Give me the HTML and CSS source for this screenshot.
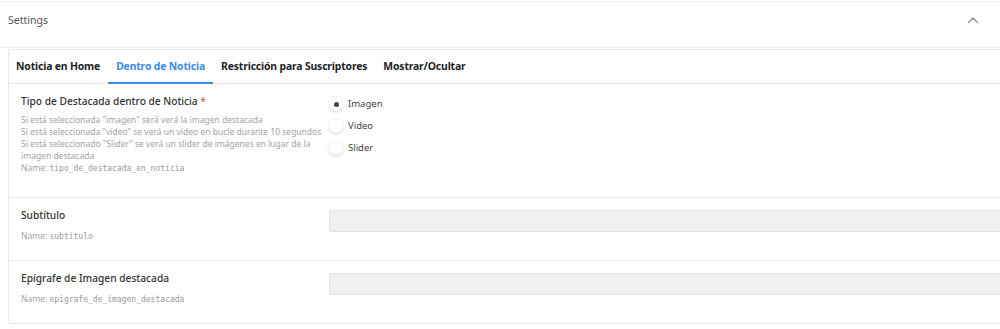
FILE: index.html
```html
<!DOCTYPE html>
<html lang="es">
<head>
<meta charset="utf-8">
<title>Settings</title>
<link rel="stylesheet" href="styles.css">
</head>
<body>
<div class="page">
  <div class="header">
    <span class="header-title">Settings</span>
    <svg class="chev" width="12" height="8" viewBox="0 0 12 8"><path d="M1.5 6.5 L6 2 L10.5 6.5" fill="none" stroke="#9a9a9a" stroke-width="1.6" stroke-linecap="round" stroke-linejoin="round"/></svg>
  </div>
  <div class="panel">
    <div class="tabs">
      <div class="tab">Noticia en Home</div>
      <div class="tab active">Dentro de Noticia</div>
      <div class="tab">Restricción para Suscriptores</div>
      <div class="tab">Mostrar/Ocultar</div>
    </div>
    <div class="row row-first">
      <div class="label-col">
        <div class="label">Tipo de Destacada dentro de Noticia <span class="req">*</span></div>
        <div class="desc">Si está seleccionada "imagen" será verá la imagen destacada<br>Si está seleccionada "video" se verá un video en bucle durante 10 segundos<br>Si está seleccionado "Slider" se verá un slider de imágenes en lugar de la imagen destacada</div>
        <div class="name">Name: <code>tipo_de_destacada_en_noticia</code></div>
      </div>
      <div class="field radios">
        <label class="radio"><span class="dot checked"></span>Imagen</label>
        <label class="radio"><span class="dot"></span>Video</label>
        <label class="radio"><span class="dot"></span>Slider</label>
      </div>
    </div>
    <div class="row">
      <div class="label-col">
        <div class="label">Subtítulo</div>
        <div class="name name-gap">Name: <code>subtitulo</code></div>
      </div>
      <div class="field"><div class="input"></div></div>
    </div>
    <div class="row">
      <div class="label-col">
        <div class="label">Epígrafe de Imagen destacada</div>
        <div class="name name-gap">Name: <code>epigrafe_de_imagen_destacada</code></div>
      </div>
      <div class="field"><div class="input"></div></div>
    </div>
  </div>
</div>
</body>
</html>
```

FILE: styles.css
```css
html, body {
  margin: 0;
  padding: 0;
  background: #ffffff;
  overflow: hidden;
}
body {
  font-family: "Noto Sans", "Open Sans", sans-serif;
  color: #333;
}
.page {
  border-top: 1px solid #eeeeee;
  margin-top: 1px;
}
.header {
  height: 45px;
  display: flex;
  align-items: center;
  justify-content: space-between;
  padding: 0 21px 0 8px;
  border-bottom: 1px solid #efefef;
}
.header-title {
  font-size: 10.5px;
  color: #555;
  margin-top: -10px;
}
.chev {
  margin-top: -10px;
}
.panel {
  margin: 1px -30px 0 8px;
  border: 1px solid #e8e8e8;
  border-radius: 0 0 0 3px;
}
.tabs {
  display: flex;
  height: 33px;
  border-bottom: 1px solid #e6e6e6;
}
.tab {
  padding: 0 8px;
  display: flex;
  align-items: center;
  font-size: 10.4px;
  font-weight: 700;
  color: #1d2327;
  border-bottom: 2px solid transparent;
  margin-bottom: -1px;
  letter-spacing: -0.15px;
}
.tab:first-child {
  padding-left: 7px;
}
.tab.active {
  color: #3b8de4;
  border-bottom-color: #3b8de4;
}
.row {
  display: flex;
  padding: 9px 0 17px;
  border-bottom: 1px solid #ebebeb;
}
.row:last-child {
  border-bottom: none;
}
.row-first {
  padding-bottom: 22px;
}
.label-col {
  width: 308px;
  padding: 0 0 0 12px;
  flex-shrink: 0;
}
.label {
  font-size: 10.2px;
  line-height: 16px;
  font-weight: 500;
  color: #333;
}
.req {
  color: #e05a5a;
}
.desc {
  margin-top: 5px;
  font-size: 8.5px;
  line-height: 12px;
  color: #a3a3a3;
}
.name {
  font-size: 8.5px;
  line-height: 12px;
  color: #a3a3a3;
}
.name-gap {
  margin-top: 7px;
}
.name code {
  font-family: "DejaVu Sans Mono", "Liberation Mono", monospace;
  font-size: 8px;
  color: #9a9a9a;
}
.field {
  flex: 1;
  padding-top: 3px;
}
.radios {
  display: flex;
  flex-direction: column;
  gap: 8px;
  padding-top: 4px;
}
.radio {
  display: flex;
  align-items: center;
  gap: 5px;
  font-size: 9.5px;
  line-height: 14px;
  color: #444;
}
.dot {
  width: 14px;
  height: 14px;
  border-radius: 50%;
  background: #fff;
  box-shadow: 0 1px 3px rgba(0, 0, 0, 0.18);
  display: flex;
  align-items: center;
  justify-content: center;
}
.dot.checked::after {
  content: "";
  width: 5px;
  height: 5px;
  border-radius: 50%;
  background: #444;
}
.input {
  height: 20px;
  background: #f0f0f0;
  border: 1px solid #e3e3e3;
  border-radius: 2px;
}
```
